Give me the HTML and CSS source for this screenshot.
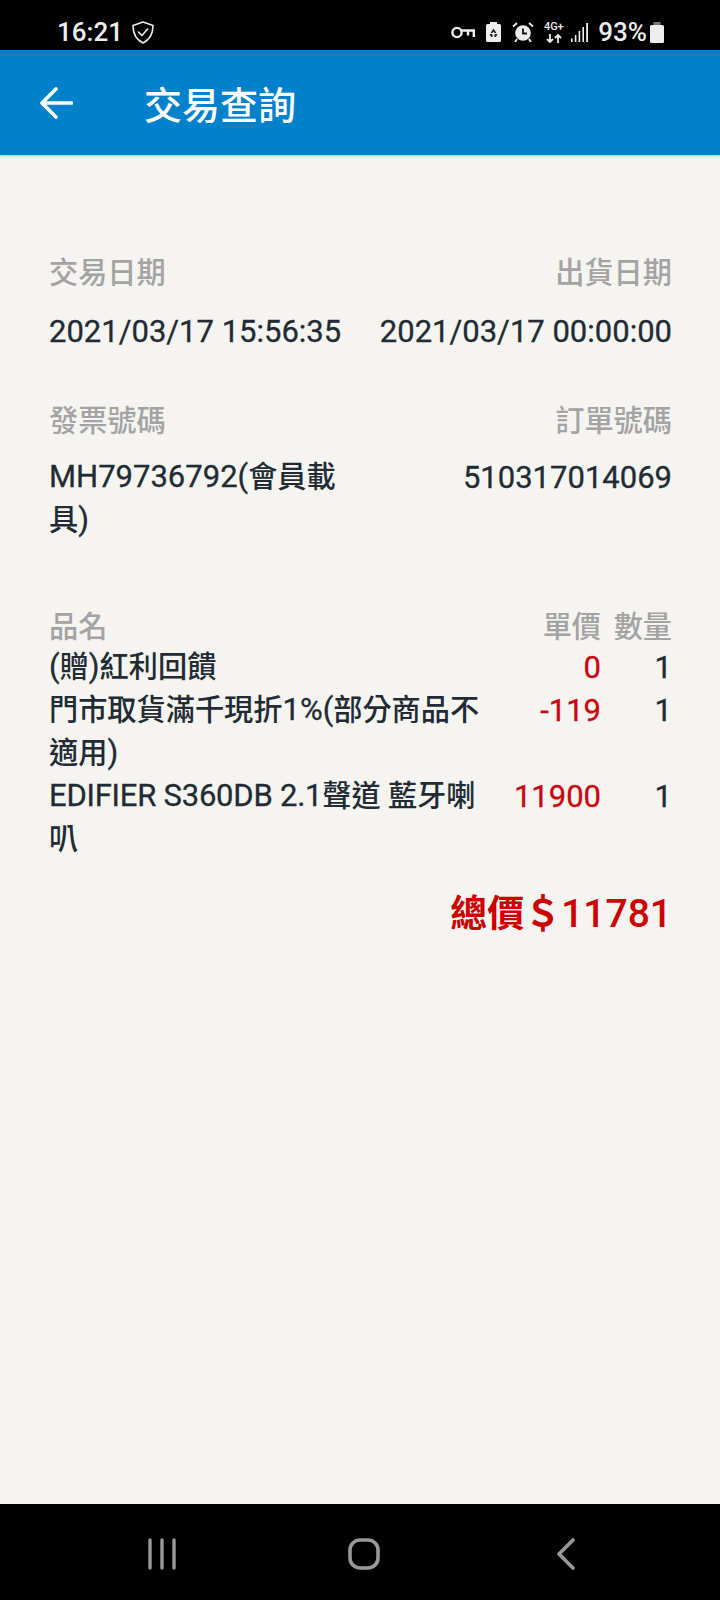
FILE: index.html
```html
<!DOCTYPE html>
<html lang="zh-Hant">
<head>
<meta charset="utf-8">
<title>交易查詢</title>
<link rel="stylesheet" href="styles.css">
</head>
<body>
<div class="phone">
  <div class="status">
    <div class="status-left">
      <span class="clock">16:21</span>
      <svg class="shield" width="22" height="23" viewBox="0 0 22 23" fill="none" stroke="#eee" stroke-width="1.6" stroke-linejoin="round" stroke-linecap="round"><path d="M11 1 L21 4.5 C21 12.5 18 18.5 11 22 C4 18.5 1 12.5 1 4.5 Z"/><path d="M6.5 11 L10 14.5 L15.5 8"/></svg>
    </div>
    <div class="status-right">
      <svg class="key" width="24" height="13" viewBox="0 0 24 13" fill="none" stroke="#eee"><circle cx="6" cy="6.5" r="4.6" stroke-width="2.4"/><path d="M10 4.5 H24 M22.8 4 V11 M17 4 V9.5" stroke-width="2.4"/></svg>
      <svg class="saver" width="15" height="20" viewBox="0 0 15 20"><path fill="#eee" d="M4 0 H11 V2 H13.5 A1.5 1.5 0 0 1 15 3.5 V18.5 A1.5 1.5 0 0 1 13.5 20 H1.5 A1.5 1.5 0 0 1 0 18.5 V3.5 A1.5 1.5 0 0 1 1.5 2 H4 Z"/><path fill="#222" d="M7.5 6.5 L10.5 11 H8.5 L7.5 9.5 L6.5 11 H4.5 Z M3.5 12 H6.5 V15 H5 Z M8.5 12 H11.5 L10 15 H8.5 Z"/></svg>
      <svg class="alarm" width="22" height="20" viewBox="0 0 22 20" fill="none" stroke="#eee"><circle cx="11" cy="11" r="7.8" fill="#eee" stroke="none"/><path d="M11 6.5 V11.5 H15" stroke="#111" stroke-width="1.8"/><path d="M1 4.5 L5 1 M21 4.5 L17 1 M5 17 L3 20 M17 17 L19 20" stroke-width="1.8"/></svg>
      <div class="net"><span class="net-label">4G+</span><svg width="16" height="9" viewBox="0 0 16 9" fill="none" stroke="#eee" stroke-width="1.8"><path d="M4 0 V8 M1 5 L4 8 L7 5 M12 9 V1 M9 4 L12 1 L15 4"/></svg></div>
      <svg class="signal" width="17" height="19" viewBox="0 0 17 19" fill="#eee"><rect x="0" y="15.5" width="1.6" height="3.5"/><rect x="3.8" y="12" width="1.6" height="7"/><rect x="7.6" y="8" width="1.6" height="11"/><rect x="11.4" y="4" width="1.6" height="15"/><rect x="15.2" y="0" width="1.8" height="19"/></svg>
      <span class="percent">93%</span>
      <svg class="battery" width="14" height="21" viewBox="0 0 14 21"><rect x="3.5" y="0" width="7" height="3" fill="#777"/><rect x="0" y="3" width="14" height="18" rx="1.5" fill="#eee"/></svg>
    </div>
  </div>

  <header class="appbar">
    <svg class="back" width="33" height="32" viewBox="0 0 33 32" fill="none" stroke="#fff" stroke-width="3.6" stroke-linecap="round" stroke-linejoin="round"><path d="M31.5 16 H2.5 M16 2 L2 16 L16 30"/></svg>
    <h1 class="title">交易查詢</h1>
  </header>

  <main class="content">
    <section class="pair first">
      <div class="col"><div class="label">交易日期</div><div class="value lat">2021/03/17 15:56:35</div></div>
      <div class="col end"><div class="label">出貨日期</div><div class="value lat">2021/03/17 00:00:00</div></div>
    </section>
    <section class="pair second">
      <div class="col wrap"><div class="label">發票號碼</div><div class="value"><span class="run">MH79736792(</span>會員載具<span class="run">)</span></div></div>
      <div class="col end"><div class="label">訂單號碼</div><div class="value lat">510317014069</div></div>
    </section>
    <section class="items">
      <div class="item head"><div class="name">品名</div><div class="price">單價</div><div class="qty">數量</div></div>
      <div class="item"><div class="name"><span class="run">(</span>贈<span class="run">)</span>紅利回饋</div><div class="price lat">0</div><div class="qty lat">1</div></div>
      <div class="item"><div class="name">門市取貨滿千現折<span class="run">1%(</span>部分商品不適用<span class="run">)</span></div><div class="price lat">-119</div><div class="qty lat">1</div></div>
      <div class="item"><div class="name"><span class="run tight">EDIFIER S360DB 2.1</span>聲道 藍牙喇叭</div><div class="price lat">11900</div><div class="qty lat">1</div></div>
    </section>
    <div class="total">總價＄<span class="total-num">11781</span></div>
  </main>

  <nav class="navbar">
    <svg width="28" height="32" viewBox="0 0 28 32" fill="none" stroke="#999" stroke-width="3.4" stroke-linecap="round"><path d="M2 2 V30 M14 2 V30 M26 2 V30"/></svg>
    <svg width="32" height="32" viewBox="0 0 32 32" fill="none" stroke="#999" stroke-width="3.6"><rect x="2" y="2" width="28" height="28" rx="10"/></svg>
    <svg width="18" height="32" viewBox="0 0 18 32" fill="none" stroke="#999" stroke-width="3.6" stroke-linecap="round" stroke-linejoin="round"><path d="M16 2 L2 16 L16 30"/></svg>
  </nav>
</div>
</body>
</html>
```
FILE: styles.css
```css
* { box-sizing: border-box; }
html, body { margin: 0; padding: 0; }
body { font-family: Roboto, "Noto Sans CJK TC", sans-serif; background: #f5f4f1; }
.phone { width: 720px; height: 1600px; display: flex; flex-direction: column; overflow: hidden; }

.status { height: 50px; flex: none; background: #000; color: #eee; display: flex; align-items: center; justify-content: space-between; padding: 14px 56px 0 57px; }
.status-left { display: flex; align-items: center; gap: 9px; }
.clock { font-size: 26px; font-weight: 500; line-height: 30px; }
.status-right { display: flex; align-items: center; }
.key { margin-right: 11px; }
.saver { margin-right: 11px; }
.alarm { margin-right: 10px; }
.net { display: flex; flex-direction: column; align-items: center; gap: 2px; width: 19px; margin-right: 8px; }
.net-label { font-size: 11px; font-weight: 500; line-height: 10px; }
.signal { margin-right: 10px; }
.percent { font-size: 26px; font-weight: 500; line-height: 30px; margin-right: 3px; }

.appbar { height: 105px; flex: none; background: #0081cc; color: #fff; display: flex; align-items: center; padding-left: 40px; gap: 71px; box-shadow: 0 1px 2px rgba(0, 0, 0, .25); }
.title { margin: 0; font-size: 38px; font-weight: 500; }

.content { flex: 1; padding: 97px 48px 0 49px; color: #222b33; font-size: 29.2px; font-weight: 500; }
.lat { font-size: 31px; font-weight: 400; -webkit-text-stroke: 0.3px currentColor; }
.run { font-size: 31px; font-weight: 400; line-height: 0; -webkit-text-stroke: 0.3px currentColor; }
.tight { letter-spacing: -0.23px; }
.pair { display: flex; justify-content: space-between; }
.second { margin-top: 47px; }
.second .label { margin-bottom: 13px; }
.col { display: flex; flex-direction: column; }
.col.end { text-align: right; }
.col.wrap { width: 290px; }
.label { color: #a3a3a3; line-height: 43px; margin-bottom: 15px; }
.value { line-height: 43px; }
.items { margin-top: 66px; }
.item { display: flex; line-height: 43px; }
.item.head { color: #a3a3a3; line-height: 38px; }
.name { flex: 1; min-width: 0; }
.price { width: 110px; text-align: right; color: #c9050f; flex: none; }
.head .price { color: #a3a3a3; }
.qty { width: 71px; text-align: right; flex: none; }
.total { margin-top: 27px; text-align: right; color: #cc0000; font-size: 37px; font-weight: 700; line-height: 52px; }
.total-num { font-size: 39px; font-weight: 500; }

.navbar { height: 96px; flex: none; background: #000; display: grid; grid-template-columns: repeat(3, 202px); justify-content: center; justify-items: center; align-items: center; padding: 4px 0 0 8px; }
```
